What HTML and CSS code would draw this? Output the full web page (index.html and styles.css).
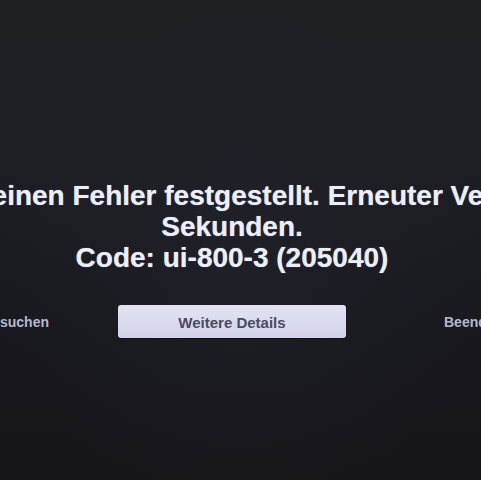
FILE: index.html
```html
<!DOCTYPE html>
<html lang="de">
<head>
<meta charset="utf-8">
<title>Fehler</title>
<link rel="stylesheet" href="styles.css">
</head>
<body>
  <main class="screen">
    <div class="message">
      <p class="line">Netflix hat einen Fehler festgestellt. Erneuter Versuch in 5</p>
      <p class="line">Sekunden.</p>
      <p class="line">Code: ui-800-3 (205040)</p>
    </div>
    <div class="actions">
      <div class="side side-left"><span class="action">Erneut versuchen</span></div>
      <button class="primary" type="button">Weitere Details</button>
      <div class="side side-right"><span class="action">Beenden</span></div>
    </div>
  </main>
</body>
</html>
```

FILE: styles.css
```css
html, body {
  margin: 0;
  height: 100%;
  overflow: hidden;
}

body {
  background:
    radial-gradient(ellipse at 50% 55%, rgba(40, 40, 52, 0.35) 0%, rgba(0, 0, 0, 0) 70%),
    linear-gradient(180deg, #1e2024 0%, #1b1d22 45%, #17171d 75%, #161519 100%);
  font-family: "Liberation Sans", Arial, sans-serif;
}

.screen {
  box-sizing: border-box;
  height: 100%;
  padding: 180px 17px 0 0;
  display: flex;
  flex-direction: column;
  align-items: center;
}

.message {
  display: flex;
  flex-direction: column;
  align-items: center;
  width: 100%;
}

.line {
  margin: 0;
  white-space: nowrap;
  font-size: 28px;
  line-height: 31px;
  font-weight: bold;
  color: #eceef9;
  text-shadow: 0 0 1px rgba(220, 224, 255, 0.6);
}

.actions {
  margin-top: 32px;
  width: 100%;
  display: grid;
  grid-template-columns: minmax(0, 1fr) 228px minmax(0, 1fr);
  align-items: center;
}

.side {
  display: flex;
  min-width: 0;
}

.side-left {
  justify-content: flex-end;
  padding-right: 69px;
}

.side-right {
  justify-content: flex-start;
  padding-left: 98px;
}

.action {
  flex: none;
  white-space: nowrap;
  font-size: 14px;
  font-weight: bold;
  color: #b7b8cc;
  padding-top: 1px;
}

.primary {
  height: 33px;
  border: 0;
  border-radius: 3px;
  background: linear-gradient(180deg, #e2e2f4 0%, #dadaef 60%, #d2d2e8 100%);
  box-shadow: 0 1px 1px rgba(0, 0, 0, 0.4);
  font-family: "Liberation Sans", Arial, sans-serif;
  font-size: 15px;
  font-weight: bold;
  color: #4a4b62;
  padding: 1px 0 0;
}
```
